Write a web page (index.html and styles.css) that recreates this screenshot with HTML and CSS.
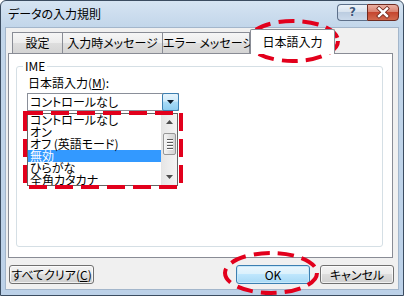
FILE: index.html
```html
<!DOCTYPE html>
<html lang="ja">
<head>
<meta charset="utf-8">
<title>データの入力規則</title>
<link rel="stylesheet" href="styles.css">
</head>
<body>
<div class="window">
  <div class="titlebar">
    <span class="title">データの入力規則</span>
    <div class="caption">
      <div class="cbtn help"><span class="qmark">?</span></div>
      <div class="cbtn close">
        <svg class="xicon" width="30" height="15" viewBox="0 0 30 15">
          <path d="M11 3.5 L19 11 M19 3.5 L11 11" stroke="#6a2216" stroke-width="4" stroke-linecap="square" fill="none"/>
          <path d="M11 3.5 L19 11 M19 3.5 L11 11" stroke="#ffffff" stroke-width="2.4" stroke-linecap="square" fill="none"/>
        </svg>
      </div>
    </div>
  </div>
  <div class="client">
    <div class="tabs">
      <div class="tab t1">設定</div>
      <div class="tab t2">入力時メッセージ</div>
      <div class="tab t3">エラー メッセージ</div>
      <div class="tab sel">日本語入力</div>
    </div>
    <div class="panel">
      <div class="group">
        <span class="legend">IME</span>
        <div class="field-label">日本語入力(<u>M</u>):</div>
        <div class="combo">
          <span class="combo-text">コントロールなし</span>
          <span class="drop">
            <svg width="7" height="4" viewBox="0 0 7 4"><path d="M0 0 H7 L3.5 4 Z" fill="#0d1b2a"/></svg>
          </span>
        </div>
        <div class="list">
          <ul class="items">
            <li class="first">コントロールなし</li>
            <li>オン</li>
            <li>オフ (英語モード)</li>
            <li class="sel">無効</li>
            <li>ひらがな</li>
            <li>全角カタカナ</li>
          </ul>
          <div class="scroll">
            <div class="sarrow">
              <svg width="7" height="4" viewBox="0 0 7 4"><path d="M0 4 H7 L3.5 0 Z" fill="#4d4d4d"/></svg>
            </div>
            <div class="thumb">
              <span class="grip"></span><span class="grip"></span><span class="grip"></span><span class="grip"></span>
            </div>
            <div class="sarrow down">
              <svg width="7" height="4" viewBox="0 0 7 4"><path d="M0 0 H7 L3.5 4 Z" fill="#4d4d4d"/></svg>
            </div>
          </div>
        </div>
      </div>
    </div>
    <div class="footer">
      <button class="btn clear">すべてクリア(<u>C</u>)</button>
      <span class="spacer"></span>
      <button class="btn ok">OK</button>
      <button class="btn cancel">キャンセル</button>
    </div>
  </div>
  <svg class="annot" width="404" height="296" viewBox="0 0 404 296">
    <ellipse cx="293" cy="41" rx="45" ry="20" fill="none" stroke="#e2001c" stroke-width="4" stroke-dasharray="16 8"/>
    <rect x="25" y="113" width="156" height="74" fill="none" stroke="#e2001c" stroke-width="4" stroke-dasharray="18 8"/>
    <ellipse cx="271" cy="273" rx="46" ry="20" fill="none" stroke="#e2001c" stroke-width="4" stroke-dasharray="16 8"/>
  </svg>
</div>
</body>
</html>
```
FILE: styles.css
```css
html, body {
  margin: 0;
  padding: 0;
}

body {
  width: 404px;
  height: 296px;
  overflow: hidden;
  background: #ffffff;
  font-family: "Noto Sans CJK JP", "Noto Sans", sans-serif;
  font-size: 12px;
  color: #000000;
  font-feature-settings: "palt";
}

.window {
  position: relative;
  width: 404px;
  height: 296px;
  box-sizing: border-box;
  border: 1px solid #3b4c60;
  border-radius: 6px 6px 0 0;
  background: linear-gradient(#d6e4f2, #c2d6ea 26px, #bcd1e8);
  display: flex;
  flex-direction: column;
  padding: 0 4px 5px 4px;
}

.titlebar {
  height: 26px;
  display: flex;
  align-items: flex-start;
}

.title {
  margin: 5px 0 0 3px;
  line-height: 16px;
  font-size: 12px;
  color: #000;
}

.caption {
  margin-left: auto;
  margin-top: 3px;
  display: flex;
}

.cbtn {
  height: 17px;
  box-sizing: border-box;
  border: 1px solid #5d708a;
  display: flex;
  align-items: center;
  justify-content: center;
}

.help {
  width: 30px;
  border-right: none;
  border-radius: 4px 0 0 4px;
  background: linear-gradient(#eef3f9, #d7e2ee 45%, #bccde1 50%, #cbdaeb);
}

.qmark {
  font-family: "DejaVu Sans", sans-serif;
  font-weight: bold;
  font-size: 12px;
  line-height: 15px;
  color: #3e5a7c;
  text-shadow: 0 0 1px #ffffff, 0 0 1px #ffffff;
}

.close {
  width: 32px;
  border-color: #6e2b21;
  border-radius: 0 4px 4px 0;
  background: linear-gradient(#eab0a2, #d98270 45%, #c5462f 50%, #d2694d);
}

.xicon {
  display: block;
}

.client {
  flex: 1;
  box-sizing: border-box;
  background: #f0f0f0;
  border: 1px solid #a3b6cb;
  display: flex;
  flex-direction: column;
  padding: 1px 5px 5px 2px;
}

.tabs {
  display: flex;
  align-items: flex-end;
  height: 24px;
  padding-left: 4px;
  position: relative;
  z-index: 1;
}

.tab {
  height: 21px;
  box-sizing: border-box;
  border: 1px solid #898c95;
  border-bottom: none;
  background: linear-gradient(#f6f6f6, #ececec 50%, #dedede 50%, #d4d4d4);
  text-align: center;
  line-height: 20px;
  margin-right: -1px;
  white-space: nowrap;
}

.t1 { width: 51px; }
.t2 { width: 101px; }
.t3 { width: 88px; }

.tab.sel {
  width: 85px;
  height: 25px;
  margin-left: 1px;
  margin-bottom: -1px;
  background: #ffffff;
  line-height: 24px;
  border-radius: 2px 2px 0 0;
}

.panel {
  height: 205px;
  box-sizing: border-box;
  border: 1px solid #898c95;
  background: #ffffff;
  padding: 12px 9px 10px 7px;
  display: flex;
  flex-direction: column;
}

.group {
  flex: 1;
  border: 1px solid #d5dfe5;
  border-radius: 3px;
  display: flex;
  flex-direction: column;
  align-items: flex-start;
}

.legend {
  margin: -8px 0 0 6px;
  padding: 0 2px;
  background: #ffffff;
  line-height: 14px;
}

.field-label {
  margin: 3px 0 0 11px;
  line-height: 14px;
}

.combo {
  margin: 3px 0 0 10px;
  width: 152px;
  height: 18px;
  box-sizing: border-box;
  border: 1px solid #8a8f99;
  background: #ffffff;
  display: flex;
  align-items: center;
}

.combo-text {
  padding-left: 2px;
  line-height: 16px;
  white-space: nowrap;
}

.drop {
  margin: -1px -1px -1px auto;
  width: 17px;
  height: 18px;
  box-sizing: border-box;
  border: 1px solid #3c7fb1;
  border-radius: 2px;
  background: linear-gradient(#e6f4fc, #cfebfb 45%, #a9dbf6 50%, #8ecdf0);
  display: flex;
  align-items: center;
  justify-content: center;
}

.drop svg {
  display: block;
}

.list {
  margin: 2px 0 0 10px;
  width: 151px;
  height: 73px;
  box-sizing: border-box;
  border: 1px solid #646464;
  background: #ffffff;
  display: flex;
  overflow: hidden;
}

.items {
  flex: 1;
  list-style: none;
  margin: 0;
  padding: 0;
  min-width: 0;
}

.items li {
  height: 12px;
  line-height: 12px;
  padding-left: 2px;
  white-space: nowrap;
}

.items li.sel {
  background: #3399ff;
  color: #ffffff;
}

.scroll {
  width: 16px;
  background: linear-gradient(to right, #e6e6e6, #f4f4f4);
  border-left: 1px solid #e4e4e4;
  box-sizing: border-box;
  display: flex;
  flex-direction: column;
  align-items: center;
}

.sarrow {
  height: 16px;
  width: 15px;
  display: flex;
  align-items: center;
  justify-content: center;
}

.sarrow svg {
  display: block;
}

.sarrow.down {
  margin-top: auto;
}

.thumb {
  margin-top: 3px;
  width: 13px;
  height: 22px;
  box-sizing: border-box;
  border: 1px solid #979797;
  border-radius: 2px;
  background: linear-gradient(to right, #f6f6f6, #e2e2e2 50%, #d4d4d4);
  display: flex;
  flex-direction: column;
  align-items: center;
  justify-content: center;
  gap: 1px;
}

.grip {
  width: 6px;
  height: 1px;
  background: #5a5a5a;
  border-bottom: 1px solid #ffffff;
}

.footer {
  display: flex;
  align-items: flex-start;
  margin-top: 7px;
}

.spacer {
  flex: 1;
}

.btn {
  font-family: "Noto Sans CJK JP", "Noto Sans", sans-serif;
  font-size: 12px;
  font-weight: 400;
  font-feature-settings: "palt";
  color: #000000;
  height: 19px;
  box-sizing: border-box;
  border: 1px solid #707070;
  border-radius: 3px;
  background: linear-gradient(#f3f3f3, #ebebeb 50%, #dddddd 50%, #cfcfcf);
  box-shadow: inset 0 0 0 1px rgba(255, 255, 255, 0.7);
  padding: 0;
  line-height: 16px;
  text-align: center;
  white-space: nowrap;
}

.clear {
  width: 85px;
  margin-left: 1px;
}

.ok {
  width: 74px;
  border-color: #3c7fb1;
  background: linear-gradient(#eaf6fd, #d9f0fc 50%, #bee6fd 50%, #a7d9f5);
  box-shadow: inset 0 0 0 1px #c8e8fa;
}

.cancel {
  width: 74px;
  margin-left: 10px;
  margin-right: -1px;
}

.annot {
  position: absolute;
  left: -1px;
  top: -1px;
  width: 404px;
  height: 296px;
  pointer-events: none;
}
```
